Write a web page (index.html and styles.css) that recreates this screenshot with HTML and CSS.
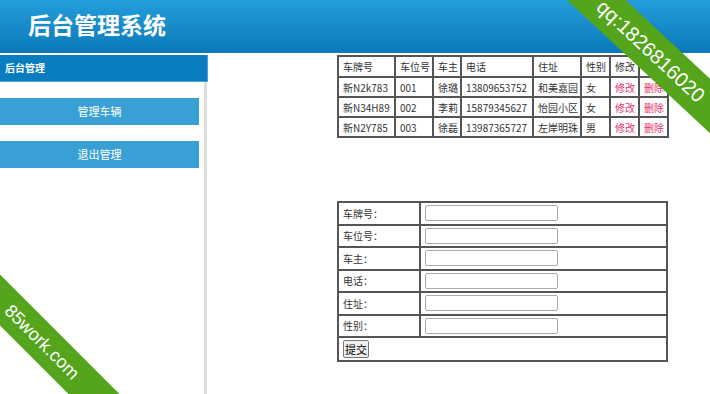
FILE: index.html
```html
<!DOCTYPE html>
<html>
<head>
<meta charset="utf-8" />
<title>后台管理系统</title>
<link rel="stylesheet" href="styles.css">
</head>
<body>
<div class="top"><h1>后台管理系统</h1></div>
<div class="wrap">
  <div class="side">
    <div class="side-title">后台管理</div>
    <div class="side-body">
      <a class="menu" href="#">管理车辆</a>
      <a class="menu" href="#">退出管理</a>
    </div>
  </div>
  <div class="main">
    <table class="list">
      <colgroup>
        <col style="width:57px"><col style="width:38px"><col style="width:28px"><col style="width:72px">
        <col style="width:48px"><col style="width:29px"><col style="width:29px"><col style="width:29px">
      </colgroup>
      <tr><td>车牌号</td><td>车位号</td><td>车主</td><td>电话</td><td>住址</td><td>性别</td><td>修改</td><td>删除</td></tr>
      <tr><td>新N2k783</td><td>001</td><td>徐璐</td><td>13809653752</td><td>和美嘉园</td><td>女</td><td><a href="#">修改</a></td><td><a href="#">删除</a></td></tr>
      <tr><td>新N34H89</td><td>002</td><td>李莉</td><td>15879345627</td><td>怡园小区</td><td>女</td><td><a href="#">修改</a></td><td><a href="#">删除</a></td></tr>
      <tr><td>新N2Y785</td><td>003</td><td>徐磊</td><td>13987365727</td><td>左岸明珠</td><td>男</td><td><a href="#">修改</a></td><td><a href="#">删除</a></td></tr>
    </table>

    <form>
    <table class="edit">
      <tr><td class="lbl">车牌号：</td><td><input type="text" /></td></tr>
      <tr><td class="lbl">车位号：</td><td><input type="text" /></td></tr>
      <tr><td class="lbl">车主：</td><td><input type="text" /></td></tr>
      <tr><td class="lbl">电话：</td><td><input type="text" /></td></tr>
      <tr><td class="lbl">住址：</td><td><input type="text" /></td></tr>
      <tr><td class="lbl">性别：</td><td><input type="text" /></td></tr>
      <tr><td colspan="2" class="last"><button type="button" class="btn">提交</button></td></tr>
    </table>
    </form>
  </div>
</div>
<div class="marks">
  <div class="ribbon ribbon-qq"><span>qq:1826816020</span></div>
  <div class="ribbon ribbon-site"><span>85work.com</span></div>
</div>
</body>
</html>
```

FILE: styles.css
```css
body{margin:0;font-family:"Noto Sans CJK SC","Liberation Sans",sans-serif;font-size:10px;color:#333;overflow:hidden;}
.top{height:53px;background:linear-gradient(#259ddb,#0a78b9);}
.top h1{margin:0;padding-left:28px;line-height:48px;font-size:23px;color:#fff;font-weight:bold;}
.wrap{display:flex;margin-top:2px;height:339px;}
.side{width:208px;display:flex;flex-direction:column;}
.side-title{height:26px;line-height:26px;background:#0a7cc0;border-bottom:1px solid #4aa5d8;border-right:1px solid #4aa5d8;color:#fff;font-weight:bold;font-size:10px;padding-left:5px;}
.side-body{flex:1;border-right:3px solid #dcdcdc;margin-right:1px;padding-top:16px;}
.menu{display:block;width:199px;height:27px;line-height:27px;margin-bottom:16px;background:#39a0d6;color:#fff;text-align:center;text-decoration:none;font-size:11px;}
.main{padding-left:129px;}
.list{border-collapse:collapse;table-layout:fixed;width:331px;}
.list td{border:2px solid #555;height:18px;padding:0 0 0 4px;white-space:nowrap;overflow:hidden;}
.list tr:first-child td{height:19px;}
.list a{color:#e3356b;text-decoration:none;}
form{margin:0;}
.edit{border-collapse:collapse;table-layout:fixed;width:331px;margin-top:63px;}
.edit td{border:2px solid #555;height:20.5px;padding:0 0 0 4px;}
.edit td.lbl{width:76px;}
.edit td.last{height:22px;}
.edit input{width:131px;height:14px;padding:0;border:1px solid #aaa;border-radius:2px;margin:0;display:block;}
.btn{font-family:"Noto Sans CJK SC",sans-serif;font-size:11px;padding:0 1px;height:18px;line-height:14px;border:1px solid #777;border-radius:2px;background:#efefef;margin:1px 0;}
.marks{position:fixed;left:0;top:0;width:100vw;height:100vh;overflow:hidden;pointer-events:none;}
.ribbon{position:absolute;height:40px;width:300px;background:#55a51c;color:#fff;text-align:center;line-height:40px;font-family:"Liberation Sans",sans-serif;}
.ribbon-qq{left:501px;top:31px;font-size:20px;transform:rotate(43deg);}
.ribbon-site{left:-108px;top:324px;height:36px;line-height:36px;font-size:18px;transform:rotate(45deg);}
```
